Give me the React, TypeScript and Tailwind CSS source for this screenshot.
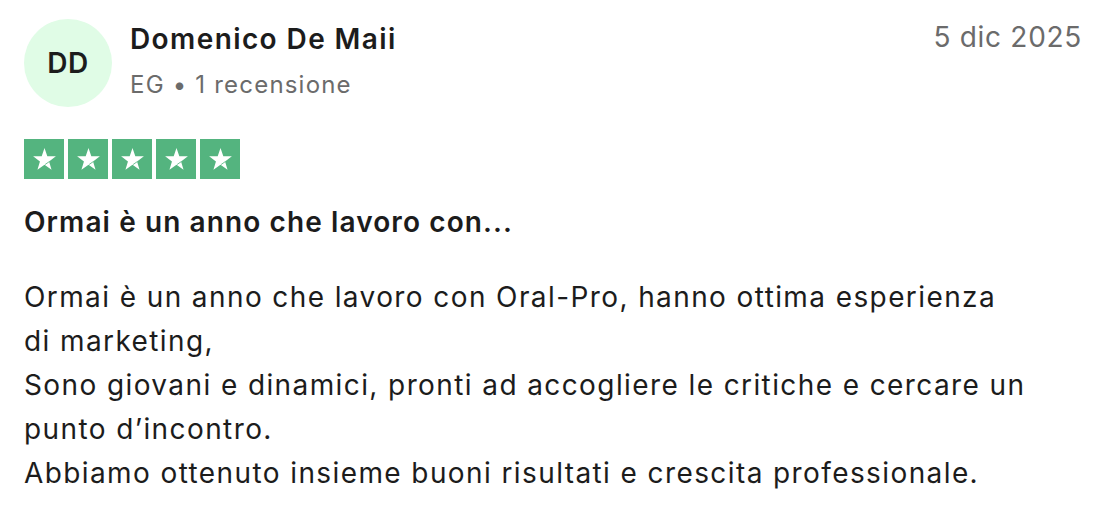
const body = [
  "Ormai è un anno che lavoro con Oral-Pro, hanno ottima esperienza",
  "di marketing,",
  "Sono giovani e dinamici, pronti ad accogliere le critiche e cercare un",
  "punto d’incontro.",
  "Abbiamo ottenuto insieme buoni risultati e crescita professionale.",
];

function Star() {
  return (
    <div className="flex h-10 w-10 items-center justify-center bg-[#54b47f]">
      <svg viewBox="0 0 24 24" className="h-[25px] w-[25px]">
        <polygon
          fill="#fff"
          points="12,1 14.7,8.78 22.94,8.95 16.37,13.92 18.76,21.8 12,17.1 5.24,21.8 7.63,13.92 1.06,8.95 9.3,8.78"
        />
        <line x1="16.6" y1="14" x2="12.6" y2="16.8" stroke="#54b47f" strokeWidth="0.8" />
      </svg>
    </div>
  );
}

export default function App() {
  return (
    <div
      className="h-[518px] w-[1106px] bg-white pl-6 pr-6 pt-[19px] text-[#1c1c1c]"
      style={{ fontFamily: "Inter, 'Noto Sans', sans-serif" }}
    >
      <div className="flex items-start">
        <div className="flex h-[88px] w-[88px] shrink-0 items-center justify-center rounded-full bg-[#e0fce6] text-[28px] font-semibold tracking-[0.5px]">
          DD
        </div>
        <div className="ml-[18px] flex-1">
          <div className="mt-[2px] text-[28px] font-semibold leading-[36px] tracking-[1.4px]">
            Domenico De Maii
          </div>
          <div className="mt-[13px] text-[24px] leading-[30px] tracking-[1.2px] text-[#6b6b6b]">
            EG • 1 recensione
          </div>
        </div>
        <div className="text-[28px] leading-[36px] tracking-[0.7px] text-[#6b6b6b]">5 dic 2025</div>
      </div>

      <div className="mt-8 flex gap-1">
        <Star />
        <Star />
        <Star />
        <Star />
        <Star />
      </div>

      <div className="mt-[25px] text-[28px] font-semibold leading-[36px] tracking-[1.1px]">
        Ormai è un anno che lavoro con...
      </div>

      <div className="mt-[35px] text-[28px] leading-[44px] tracking-[1.4px]">
        {body.map((line) => (
          <div key={line} className="whitespace-nowrap">
            {line}
          </div>
        ))}
      </div>
    </div>
  );
}
